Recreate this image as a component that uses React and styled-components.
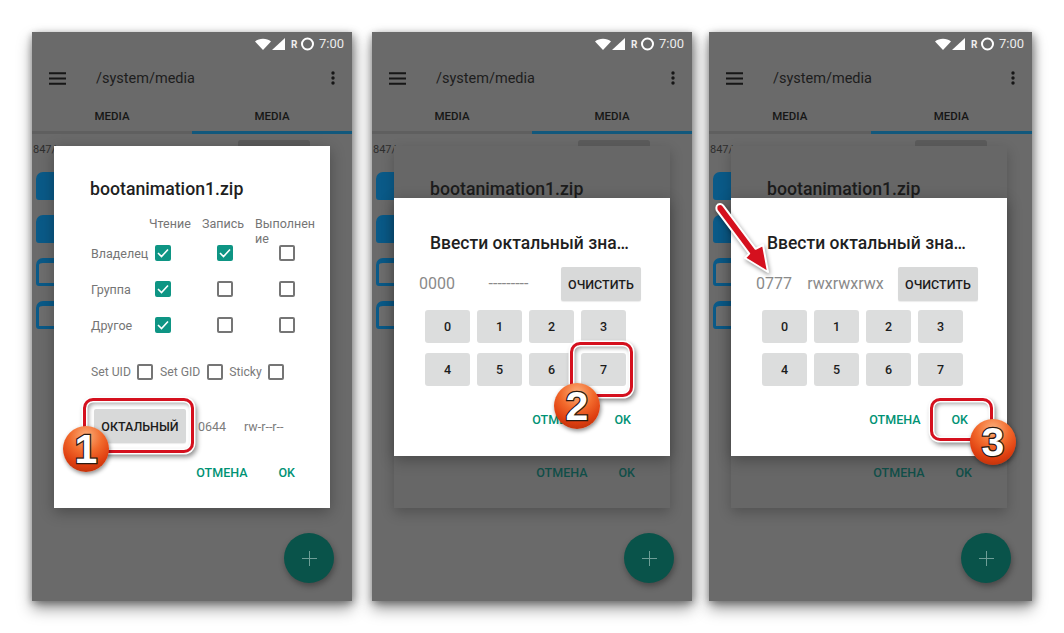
import React from 'react';
import styled, { createGlobalStyle } from 'styled-components';

const GlobalStyle = createGlobalStyle`
	html, body {
		margin: 0;
		padding: 0;
		background: #fff;
		overflow: hidden;
		font-family: Roboto, "Liberation Sans", sans-serif;
	}
`;

const Page = styled.div`
	display: flex;
	width: 1064px;
	height: 633px;
	box-sizing: border-box;
	padding: 32px 0 0 32px;
`;

const Phone = styled.section`
	position: relative;
	display: flex;
	flex-direction: column;
	flex: none;
	width: ${(p) => p.$width}px;
	height: 569px;
	margin-left: ${(p) => p.$gap}px;
	background: #6a6a6a;
	box-shadow: 0 8px 14px rgba(0, 0, 0, 0.38), 3px 2px 8px rgba(0, 0, 0, 0.28), -2px 2px 6px rgba(0, 0, 0, 0.14);
`;

const StatusBar = styled.div`
	display: flex;
	align-items: center;
	justify-content: flex-end;
	height: 23px;
	padding-right: 8px;
	color: #ececec;
	font-size: 13px;
`;

const StatusIcons = styled.svg`
	width: 59px;
	height: 14px;
	margin-right: 5px;
`;

const Toolbar = styled.div`
	display: flex;
	align-items: center;
	height: 46px;
	padding: 0 17px;
	color: #1d1d1d;
	font-size: 14.5px;
`;

const PathTitle = styled.span`
	flex: 1;
	margin-left: 30px;
`;

const Tabs = styled.div`
	display: flex;
	height: 33px;
`;

const Tab = styled.div`
	flex: 1;
	display: flex;
	align-items: center;
	justify-content: center;
	box-sizing: border-box;
	border-bottom: 3px solid ${(p) => (p.$active ? '#12587c' : '#5f5f5f')};
	color: #161616;
	font-size: 11.5px;
	font-weight: 500;
`;

const Body = styled.div`
	flex: 1;
	display: flex;
	flex-direction: column;
	align-items: flex-start;
	overflow: hidden;
	padding: 9px 0 0 1px;
`;

const PathCount = styled.div`
	height: 14px;
	color: #2e2e2e;
	font-size: 11px;
	line-height: 14px;
`;

const Folders = styled.div`
	display: flex;
	flex-direction: column;
	gap: 15px;
	margin: 15px 0 0 3px;
`;

const Folder = styled.div`
	box-sizing: border-box;
	width: 34px;
	height: 28px;
	border: 3px solid #0a5a88;
	border-top-width: 5px;
	border-radius: 7px 7px 3px 3px;
	background: ${(p) => (p.$filled ? '#0a5a88' : '#6e6e6e')};
`;

const SheetEdge = styled.div`
	position: absolute;
	top: 108px;
	left: 206px;
	width: 72px;
	height: 6px;
	border-radius: 3px 3px 0 0;
	background: #5b5b5b;
`;

const Fab = styled.div`
	position: absolute;
	left: 252px;
	top: 501px;
	display: flex;
	align-items: center;
	justify-content: center;
	width: 50px;
	height: 50px;
	border-radius: 50%;
	background: #09534a;
	box-shadow: 1px 3px 6px rgba(0, 0, 0, 0.35);
`;

const Dialog = styled.div`
	position: absolute;
	top: ${(p) => p.$top}px;
	left: 22px;
	box-sizing: border-box;
	display: flex;
	flex-direction: column;
	width: 276px;
	height: ${(p) => p.$height}px;
	padding-top: ${(p) => p.$pad}px;
	background: #fff;
	box-shadow: 0 4px 14px rgba(0, 0, 0, 0.3);
`;

const BackDialog = styled(Dialog)`
	background: #676767;
	box-shadow: 0 5px 12px rgba(0, 0, 0, 0.22);
`;

const Title = styled.h2`
	margin: 0;
	padding-left: 36px;
	color: ${(p) => (p.$dim ? '#1c1c1c' : '#1f1f1f')};
	font-size: ${(p) => p.$size}px;
	font-weight: 500;
	line-height: 22px;
	white-space: nowrap;
`;

const HeaderRow = styled.div`
	display: grid;
	grid-template-columns: 53px 53px 60px;
	height: 19px;
	margin: 16px 0 0 95px;
	color: #757575;
	font-size: 12.5px;
	line-height: 15px;
`;

const HeaderCell = styled.span`
	word-break: break-all;
`;

const PermRow = styled.div`
	display: grid;
	grid-template-columns: 64px 62px 62px 16px;
	align-items: center;
	height: 36px;
	padding-left: 37px;
	color: #757575;
	font-size: 12.5px;
`;

const Box = styled.span`
	box-sizing: border-box;
	display: flex;
	align-items: center;
	justify-content: center;
	width: 16px;
	height: 16px;
	border: 2px solid ${(p) => (p.$on ? '#0e9584' : '#757575')};
	border-radius: 2px;
	background: ${(p) => (p.$on ? '#0e9584' : '#fff')};
`;

const SpecialRow = styled.div`
	display: flex;
	align-items: center;
	gap: 6.5px;
	height: 20px;
	margin: 19px 0 0 37px;
	color: #7a7a7a;
	font-size: 12.2px;
`;

const OctalRow = styled.div`
	display: flex;
	align-items: center;
	margin: 27px 0 0 40px;
	color: #7c7c7c;
	font-size: 12.5px;
`;

const GreyButton = styled.button`
	flex: none;
	width: ${(p) => p.$width}px;
	height: 34px;
	padding: 0;
	border: none;
	border-radius: 2px;
	background: #d8d9d9;
	color: #1c1c1c;
	font-family: inherit;
	font-size: 12.5px;
	font-weight: 500;
	box-shadow: 0 1px 1px rgba(0, 0, 0, 0.08);
`;

const OctalValue = styled.span`
	margin-left: 12px;
	width: 46px;
`;

const Actions = styled.div`
	display: flex;
	justify-content: flex-end;
	gap: 31px;
	margin-top: ${(p) => p.$top}px;
	padding-right: ${(p) => p.$right}px;
	color: ${(p) => (p.$dim ? '#114f49' : '#009274')};
	font-size: 12.5px;
	font-weight: 500;
	line-height: 16px;
`;

const ValueRow = styled.div`
	display: grid;
	grid-template-columns: 51px 91px 80px;
	align-items: center;
	margin: 13px 0 0 25px;
	color: #8a8a8a;
`;

const OctalInput = styled.span`
	padding-bottom: 2px;
	font-size: 16px;
`;

const Symbolic = styled.span`
	width: 77px;
	padding-bottom: 2px;
	font-size: 16px;
	text-align: center;
`;

const Keypad = styled.div`
	display: grid;
	grid-template-columns: repeat(4, 45px);
	grid-auto-rows: 33px;
	gap: 10px 7px;
	margin: 9px 0 0 31px;
`;

const Key = styled.button`
	padding: 0;
	border: none;
	border-radius: 3px;
	background: #dcdddd;
	color: #1c1c1c;
	font-family: inherit;
	font-size: 12.5px;
	font-weight: 500;
`;

const Ring = styled.div`
	position: absolute;
	left: ${(p) => p.$x}px;
	top: ${(p) => p.$y}px;
	box-sizing: border-box;
	width: ${(p) => p.$w}px;
	height: ${(p) => p.$h}px;
	border: 3px solid #d5101e;
	border-radius: 10px;
	box-shadow: 0 0 0 1.5px #fff, 2px 3px 5px 1px rgba(0, 0, 0, 0.45), inset 0 0 0 1.5px #fff, inset 2px 2px 4px 1px rgba(0, 0, 0, 0.35);
`;

const Badge = styled.div`
	position: absolute;
	left: ${(p) => p.$x - 23}px;
	top: ${(p) => p.$y - 23}px;
	display: flex;
	align-items: center;
	justify-content: center;
	width: 46px;
	height: 46px;
	border-radius: 50%;
	background: radial-gradient(circle at 50% 22%, #fbb07c 0%, #f26a2c 38%, #df3f10 68%, #a82a08 100%);
	box-shadow: 1px 2px 4px rgba(0, 0, 0, 0.45);
	color: #fff;
	font-family: "Liberation Sans", sans-serif;
	font-size: 41px;
	font-weight: 700;
	-webkit-text-stroke: 2.5px #2a1a12;
	paint-order: stroke fill;
`;

const ArrowMark = styled.svg`
	position: absolute;
	left: -2px;
	top: 168px;
	width: 72px;
	height: 84px;
	filter: drop-shadow(1px 2px 2px rgba(0, 0, 0, 0.4));
`;

function StatusIconsArt() {
	return (
		<StatusIcons viewBox='0 0 59 14'>
			<path d='M0 4.5C4 .8 12 .8 16 4.5L8 13z' fill='#fff' />
			<path d='M17 13L30 1v12z' fill='#fff' />
			<text x='36' y='11' fontSize='10' fontWeight='700' fill='#eee' fontFamily='Roboto, sans-serif'>
				R
			</text>
			<circle cx='52.5' cy='7' r='5.5' fill='none' stroke='#fff' strokeWidth='2' />
		</StatusIcons>
	);
}

function Hamburger() {
	return (
		<svg width='17' height='13' viewBox='0 0 17 13'>
			<path d='M0 1.2h17M0 6.5h17M0 11.8h17' stroke='#161616' strokeWidth='2' />
		</svg>
	);
}

function Kebab() {
	return (
		<svg width='4' height='14' viewBox='0 0 4 14'>
			<circle cx='2' cy='2' r='1.7' fill='#161616' />
			<circle cx='2' cy='7' r='1.7' fill='#161616' />
			<circle cx='2' cy='12' r='1.7' fill='#161616' />
		</svg>
	);
}

function CheckBox({ on }) {
	return (
		<Box $on={on}>
			{on && (
				<svg width='12' height='10' viewBox='0 0 12 10'>
					<path d='M1 5l3.5 3.5L11 1.5' fill='none' stroke='#fff' strokeWidth='1.6' />
				</svg>
			)}
		</Box>
	);
}

function AppScreen({ width, gap, children }) {
	return (
		<Phone $width={width} $gap={gap}>
			<StatusBar>
				<StatusIconsArt />
				7:00
			</StatusBar>
			<Toolbar>
				<Hamburger />
				<PathTitle>/system/media</PathTitle>
				<Kebab />
			</Toolbar>
			<Tabs>
				<Tab>MEDIA</Tab>
				<Tab $active>MEDIA</Tab>
			</Tabs>
			<Body>
				<PathCount>847/</PathCount>
				<Folders>
					<Folder $filled />
					<Folder $filled />
					<Folder />
					<Folder />
				</Folders>
			</Body>
			<SheetEdge />
			<Fab>
				<svg width='15' height='15' viewBox='0 0 15 15'>
					<path d='M7.5 0v15M0 7.5h15' stroke='#6f9e97' strokeWidth='1' />
				</svg>
			</Fab>
			{children}
		</Phone>
	);
}

const permissions = [
	{ name: 'Владелец', checks: [true, true, false] },
	{ name: 'Группа', checks: [true, false, false] },
	{ name: 'Другое', checks: [true, false, false] },
];

function PermissionsDialog() {
	return (
		<Dialog $top={114} $height={362} $pad={32}>
			<Title $size={17.7}>bootanimation1.zip</Title>
			<HeaderRow>
				<HeaderCell>Чтение</HeaderCell>
				<HeaderCell>Запись</HeaderCell>
				<HeaderCell>Выполнение</HeaderCell>
			</HeaderRow>
			{permissions.map((row) => (
				<PermRow key={row.name}>
					<span>{row.name}</span>
					{row.checks.map((on, i) => (
						<CheckBox key={i} on={on} />
					))}
				</PermRow>
			))}
			<SpecialRow>
				<span>Set UID</span>
				<CheckBox />
				<span>Set GID</span>
				<CheckBox />
				<span>Sticky</span>
				<CheckBox />
			</SpecialRow>
			<OctalRow>
				<GreyButton $width={92}>ОКТАЛЬНЫЙ</GreyButton>
				<OctalValue>0644</OctalValue>
				<span>rw-r--r--</span>
			</OctalRow>
			<Actions $top={22} $right={35}>
				<span>ОТМЕНА</span>
				<span>OK</span>
			</Actions>
		</Dialog>
	);
}

function DimmedDialog() {
	return (
		<BackDialog $top={114} $height={362} $pad={32}>
			<Title $dim $size={17.7}>bootanimation1.zip</Title>
			<Actions $dim $top={265} $right={35}>
				<span>ОТМЕНА</span>
				<span>OK</span>
			</Actions>
		</BackDialog>
	);
}

function OctalDialog({ value, symbolic }) {
	return (
		<Dialog $top={166} $height={258} $pad={34}>
			<Title $size={17.5}>Ввести октальный зна…</Title>
			<ValueRow>
				<OctalInput>{value}</OctalInput>
				<Symbolic>{symbolic}</Symbolic>
				<GreyButton $width={80}>ОЧИСТИТЬ</GreyButton>
			</ValueRow>
			<Keypad>
				{[0, 1, 2, 3, 4, 5, 6, 7].map((n) => (
					<Key key={n}>{n}</Key>
				))}
			</Keypad>
			<Actions $top={26} $right={39}>
				<span>ОТМЕНА</span>
				<span>OK</span>
			</Actions>
		</Dialog>
	);
}

export default function App() {
	return (
		<>
			<GlobalStyle />
			<Page>
				<AppScreen width={320} gap={0}>
					<PermissionsDialog />
					<Ring $x={51} $y={366} $w={111} $h={55} />
					<Badge $x={54} $y={417}>1</Badge>
				</AppScreen>
				<AppScreen width={320} gap={20}>
					<DimmedDialog />
					<OctalDialog value='0000' symbolic='---------' />
					<Ring $x={198} $y={310} $w={63} $h={55} />
					<Badge $x={205} $y={374}>2</Badge>
				</AppScreen>
				<AppScreen width={323} gap={17}>
					<DimmedDialog />
					<OctalDialog value='0777' symbolic='rwxrwxrwx' />
					<Ring $x={221} $y={366} $w={63} $h={43} />
					<Badge $x={284} $y={410}>3</Badge>
					<ArrowMark viewBox='0 0 72 84'>
						<path
							d='M16.2 5.6L48.6 48.8L56 45L61 72L38 58L42.2 53.6L9.8 10.4Q8.5 6 11 4.5Q14 3 16.2 5.6z'
							fill='#d5101e'
							stroke='#fff'
							strokeWidth='2'
							strokeLinejoin='round'
						/>
					</ArrowMark>
				</AppScreen>
			</Page>
		</>
	);
}
